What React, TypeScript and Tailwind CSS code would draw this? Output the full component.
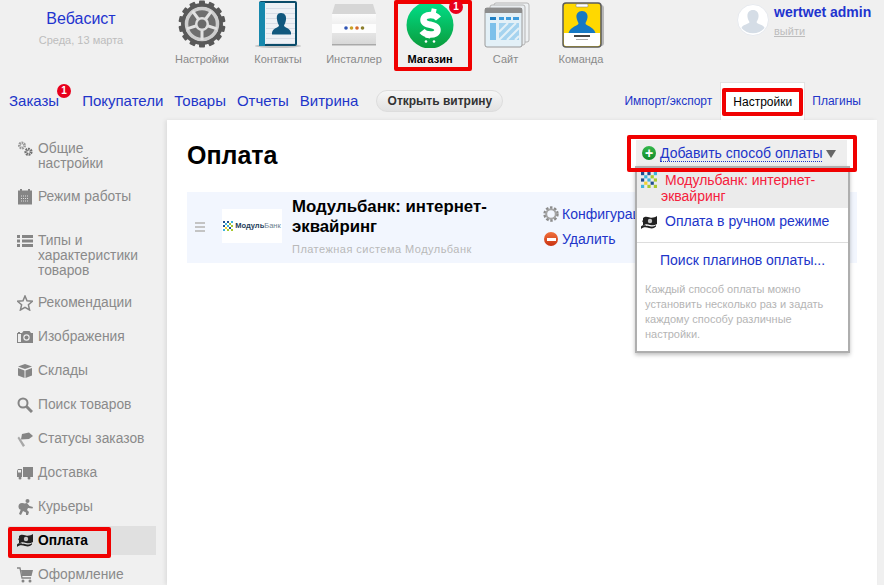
import type { ReactNode } from 'react';

/* Red annotation frame laid over a highlighted control */
function RedFrame({ className }: { className: string }) {
  return <div className={`pointer-events-none absolute rounded-[2px] border-[4px] border-[#f00000] ${className}`} />;
}

function Badge({ className }: { className: string }) {
  return (
    <span className={`absolute flex h-[14px] w-[14px] items-center justify-center rounded-full bg-[#e8001c] text-[10px] leading-none font-bold text-white ${className}`}>
      1
    </span>
  );
}

function GearIcon() {
  const teeth = Array.from({ length: 14 }, (_, i) => (i * 360) / 14);
  return (
    <svg viewBox="0 0 48 48" className="h-[48px] w-[48px]">
      {teeth.map((a) => (
        <rect key={a} x="21" y="0.500" width="6" height="7" rx="1" fill="#585858" transform={`rotate(${a} 24 24)`} />
      ))}
      <circle cx="24" cy="24" r="19" fill="none" stroke="#585858" strokeWidth="4" />
      <circle cx="24" cy="24" r="15.500" fill="#6e6e6e" stroke="#cdcdcd" strokeWidth="3.500" />
      {[0, 72, 144, 216, 288].map((a) => (
        <path key={a} d="M22.500 24 L22.500 8 H25.500 L25.500 24 Z" fill="#e2e2e2" transform={`rotate(${a + 36} 24 24)`} />
      ))}
      <circle cx="24" cy="24" r="7" fill="#dedede" />
      <circle cx="24" cy="24" r="4.500" fill="#6a6a6a" />
    </svg>
  );
}

function ContactsIcon() {
  const lines = [8, 13, 18, 23, 28, 33, 38, 43];
  return (
    <svg viewBox="0 0 48 48" className="h-[48px] w-[48px]">
      <ellipse cx="24" cy="46" rx="23" ry="2" fill="#c4c4c4" />
      <rect x="5" y="1" width="38" height="45" rx="2" fill="#0b4c6a" />
      <rect x="11" y="3" width="30" height="41" fill="#eef1f5" />
      {lines.map((y) => (
        <rect key={y} x="12" y={y} width="29" height="1" fill="#d8dde6" />
      ))}
      <rect x="5" y="2" width="6" height="44" fill="#1688ad" />
      <path d="M27 13 c4 0 5.500 3 5 6.500 c-0.300 3 -1.500 5 -2 6 c0 2 6 2.500 7 7 v2 H18 v-2 c1 -4.500 7 -5 7 -7 c-0.500 -1 -1.700 -3 -2 -6 c-0.500 -3.500 0 -6.500 4 -6.500 Z" fill="#11587e" />
    </svg>
  );
}

function InstallerIcon() {
  return (
    <svg viewBox="0 0 48 48" className="h-[48px] w-[48px]">
      <defs>
        <linearGradient id="boxBody" x1="0" y1="0" x2="0" y2="1">
          <stop offset="0" stopColor="#fbfbfb" />
          <stop offset="1" stopColor="#d8d8d8" />
        </linearGradient>
      </defs>
      <path d="M5 4 H43 L46 14 H2 Z" fill="#d6d6d6" />
      <rect x="2" y="14" width="44" height="30" fill="url(#boxBody)" />
      <rect x="2" y="44" width="44" height="1.500" fill="#a9a9a9" />
      <rect x="2" y="24" width="44" height="9" fill="#fdfdfd" />
      <circle cx="16" cy="28" r="1.800" fill="#2f55b5" />
      <circle cx="21.500" cy="28" r="1.800" fill="#c9a227" />
      <circle cx="27" cy="28" r="1.800" fill="#d6692a" />
      <circle cx="32.500" cy="28" r="1.800" fill="#8c7f2c" />
    </svg>
  );
}

function StoreIcon() {
  return (
    <svg viewBox="0 0 48 48" className="h-[48px] w-[48px]">
      <defs>
        <linearGradient id="storeGreen" x1="0" y1="0" x2="0" y2="1">
          <stop offset="0" stopColor="#00e08a" />
          <stop offset="1" stopColor="#0b9a3a" />
        </linearGradient>
      </defs>
      <circle cx="24" cy="25" r="23.500" fill="url(#storeGreen)" />
      <path d="M32.500 18.500 C30.500 16 27.500 15 24.500 15 C20 15 17.500 17 17.500 20 C17.500 26.500 31.500 23 31.500 30 C31.500 33 28.500 34.500 24.500 34.500 C21 34.500 18 33.500 16 31" fill="none" stroke="#fff" strokeWidth="6.500" />
      <rect x="25" y="8.500" width="5" height="7" fill="#fff" transform="rotate(12 27 12)" />
      <rect x="19.500" y="34" width="5" height="4" fill="#fff" transform="rotate(12 22 36)" />
      <circle cx="20" cy="41.500" r="1.300" fill="#fff" />
      <circle cx="28" cy="41.500" r="1.300" fill="#fff" />
    </svg>
  );
}

function SiteIcon() {
  return (
    <svg viewBox="0 0 48 48" className="h-[48px] w-[48px]">
      <rect x="12" y="3" width="35" height="39" rx="2" fill="#eef1f3" stroke="#b5b5b5" />
      <rect x="8" y="5" width="35" height="40" rx="2" fill="#e8ecef" stroke="#b5b5b5" />
      <rect x="3" y="8" width="37" height="39" rx="2" fill="#e3f0f7" stroke="#9a9a9a" />
      <rect x="3" y="8" width="37" height="5" fill="#8d8d8d" />
      <rect x="8" y="17" width="6" height="3" fill="#1f7fc4" />
      <rect x="17" y="17" width="5" height="3" fill="#3d9bdc" />
      <rect x="24" y="17" width="5" height="3" fill="#3d9bdc" />
      <rect x="31" y="17" width="6" height="3" fill="#3d9bdc" />
      <rect x="8" y="23" width="6" height="17" fill="#7cc0ea" />
      <rect x="17" y="23" width="20" height="17" fill="#a5d3ef" />
      <path d="M17 32 L26 23 M17 40 L34 23 M25 40 L37 28 M33 40 L37 36" stroke="#e3f0f7" strokeWidth="2" />
    </svg>
  );
}

function TeamIcon() {
  return (
    <svg viewBox="0 0 48 48" className="h-[48px] w-[48px]">
      <rect x="10" y="5" width="37" height="41" rx="3" fill="#b7b7b7" />
      <rect x="6" y="3" width="38" height="44" rx="3" fill="#ffd800" stroke="#5b5b5b" strokeWidth="1.500" />
      <path d="M7 33 H43 V44 a2 2 0 0 1 -2 2 H9 a2 2 0 0 1 -2 -2 Z" fill="#fff" />
      <rect x="19" y="4" width="12" height="3" rx="1" fill="#fff" stroke="#777" strokeWidth="0.500" />
      <path d="M25 11 c4 0 6 3 5.500 6.500 c-0.300 3 -2 5 -2 6 c0 2 8 3 10 9.500 H11.500 c2 -6.500 10 -7.500 10 -9.500 c0 -1 -1.700 -3 -2 -6 c-0.500 -3.500 1.500 -6.500 5.500 -6.500 Z" fill="#1578c4" />
      <rect x="17" y="35" width="16" height="2" fill="#444" />
      <rect x="19" y="39" width="12" height="1" fill="#aaa" />
    </svg>
  );
}

const apps: { label: string; icon: ReactNode; width: string; active?: boolean }[] = [
  { label: 'Настройки', icon: <GearIcon />, width: 'w-[76px]' },
  { label: 'Контакты', icon: <ContactsIcon />, width: 'w-[76px]' },
  { label: 'Инсталлер', icon: <InstallerIcon />, width: 'w-[76px]' },
  { label: 'Магазин', icon: <StoreIcon />, width: 'w-[76px]', active: true },
  { label: 'Сайт', icon: <SiteIcon />, width: 'w-[75px]' },
  { label: 'Команда', icon: <TeamIcon />, width: 'w-[76px]' },
];

function FlagIcon({ className = '', color = '#222' }: { className?: string; color?: string }) {
  return (
    <svg viewBox="0 0 16 13" className={className}>
      <path d="M2 2 C4 0 6 0.500 9 1.500 C11 2 14 1.500 16 0 V8 C14 9.500 11 9.500 9 9 C6 8 4 8 2 9.500 Z" fill={color} />
      <path d="M0 10.500 C1 9 3 9 4 9.500 L1 5 V4 L5 10 C7 9.500 8 10.500 10 10.500 C12 10.500 14 10 15 9 V10.500 C13 12.500 11 13 8 12 C5 11 2 11 0 13 Z" fill={color} />
      <circle cx="9" cy="5" r="2.200" fill="#c8c8c8" />
    </svg>
  );
}

/* Solid grey glyphs of the settings sidebar */
function SideIcon({ children }: { children: ReactNode }) {
  return (
    <svg viewBox="0 0 16 16" className="h-[16px] w-[16px]" fill="#858585">
      {children}
    </svg>
  );
}

const sideIcons = {
  gears: (
    <SideIcon>
      <circle cx="5" cy="4.500" r="2.600" fill="none" stroke="#999" strokeWidth="2.800" strokeDasharray="1.600 0.700" />
      <circle cx="11.500" cy="10.800" r="2.600" fill="none" stroke="#707070" strokeWidth="3" strokeDasharray="1.600 0.700" />
    </SideIcon>
  ),
  calendar: (
    <SideIcon>
      <rect x="3" y="0" width="2" height="2" />
      <rect x="11" y="0" width="2" height="2" />
      <rect x="1" y="1.500" width="14" height="14" />
      <path d="M4 7 H12 M4 9.500 H12 M4 12 H12" stroke="#ddd" strokeWidth="1" strokeDasharray="1 1" />
    </SideIcon>
  ),
  list: (
    <SideIcon>
      <rect x="0" y="2" width="3" height="3" />
      <rect x="0" y="6.500" width="3" height="3" />
      <rect x="0" y="11" width="3" height="3" />
      <rect x="5" y="2" width="11" height="3" />
      <rect x="5" y="6.500" width="11" height="3" />
      <rect x="5" y="11" width="11" height="3" />
    </SideIcon>
  ),
  star: (
    <SideIcon>
      <path d="M8 1 L10 5.800 L15.500 6.300 L11.400 9.800 L12.600 15 L8 12.300 L3.400 15 L4.600 9.800 L0.500 6.300 L6 5.800 Z" fill="none" stroke="#858585" strokeWidth="1.500" />
    </SideIcon>
  ),
  camera: (
    <SideIcon>
      <path d="M0 4 H1 V3 H3 V4 H5 L6.500 2 H12.500 L14 4 H16 V14 H0 Z" />
      <rect x="1" y="5" width="3" height="8" fill="#eee" />
      <circle cx="9.500" cy="8.500" r="3.200" fill="#eee" />
      <circle cx="9.500" cy="8.500" r="2" />
    </SideIcon>
  ),
  box: (
    <SideIcon>
      <path d="M8 1 L15 3.500 L8 6 L1 3.500 Z" />
      <path d="M1 5 L7.500 7.500 V15 L1 12.500 Z" />
      <path d="M15 5 L8.500 7.500 V15 L15 12.500 Z" />
    </SideIcon>
  ),
  search: (
    <SideIcon>
      <circle cx="6" cy="6" r="4.500" fill="none" stroke="#858585" strokeWidth="2" />
      <path d="M9.500 9.500 L15 15" stroke="#858585" strokeWidth="3" />
    </SideIcon>
  ),
  status: (
    <SideIcon>
      <path d="M5 3 L12 1.500 L16 5 L12 8 L4 8.500 Z" />
      <path d="M0.500 7 L2 5.500 L8 14.500 L6 16 Z" fill="#a8a8a8" />
    </SideIcon>
  ),
  truck: (
    <SideIcon>
      <rect x="6" y="2" width="10" height="10" />
      <path d="M0 6 L1 4 H5 V12 H0 Z" />
      <rect x="1" y="5" width="3" height="2.500" fill="#eee" />
      <circle cx="3" cy="13" r="1.500" />
      <circle cx="12" cy="13" r="1.500" />
    </SideIcon>
  ),
  courier: (
    <SideIcon>
      <circle cx="10.500" cy="2" r="2" />
      <circle cx="5" cy="7.500" r="3.500" />
      <path d="M5 5 L10 4 L12.500 7 L16 8 L15.500 9.500 L11 9 L10 11 L12 13 L11 16 L9 16 L9 13.500 L6 12 L4 16 L2 15 L4 10 Z" />
    </SideIcon>
  ),
  cart: (
    <SideIcon>
      <path d="M0 1 H3 L5 11 H14" fill="none" stroke="#858585" strokeWidth="1.300" />
      <path d="M4 3 H16 L14.500 9 H5 Z" />
      <circle cx="6" cy="14" r="1.500" />
      <circle cx="13" cy="14" r="1.500" />
    </SideIcon>
  ),
};

const sidebar: { lines: string[]; icon: ReactNode; gap: string }[] = [
  { lines: ['Общие', 'настройки'], icon: sideIcons.gears, gap: 'mb-[18px]' },
  { lines: ['Режим работы'], icon: sideIcons.calendar, gap: 'mb-[28px]' },
  { lines: ['Типы и', 'характеристики', 'товаров'], icon: sideIcons.list, gap: 'mb-[17px]' },
  { lines: ['Рекомендации'], icon: sideIcons.star, gap: 'mb-[18px]' },
  { lines: ['Изображения'], icon: sideIcons.camera, gap: 'mb-[18px]' },
  { lines: ['Склады'], icon: sideIcons.box, gap: 'mb-[18px]' },
  { lines: ['Поиск товаров'], icon: sideIcons.search, gap: 'mb-[18px]' },
  { lines: ['Статусы заказов'], icon: sideIcons.status, gap: 'mb-[18px]' },
  { lines: ['Доставка'], icon: sideIcons.truck, gap: 'mb-[18px]' },
  { lines: ['Курьеры'], icon: sideIcons.courier, gap: 'mb-[11px]' },
];

function MbMark({ className }: { className: string }) {
  const cells = [
    ['#1f4f8f', 0, 0], ['#1f4f8f', 2, 0], ['#3fb4dc', 4, 0],
    ['#3fb4dc', 1, 1], ['#a9c92f', 3, 1],
    ['#1f4f8f', 0, 2], ['#3fb4dc', 2, 2], ['#a9c92f', 4, 2],
    ['#f2d230', 1, 3], ['#1f4f8f', 3, 3],
    ['#3fb4dc', 0, 4], ['#a9c92f', 2, 4], ['#a9c92f', 4, 4],
  ] as const;
  return (
    <svg viewBox="0 0 5 5" className={className}>
      {cells.map(([c, x, y]) => (
        <rect key={`${x}-${y}`} x={x} y={y} width="1" height="1" fill={c} />
      ))}
    </svg>
  );
}

export default function App() {
  return (
    <div className="h-[585px] w-[884px] overflow-hidden bg-[#f0f0f0] font-['Liberation_Sans',Arial,sans-serif] text-[#2135c9]">
      {/* App launcher */}
      <header className="flex h-[82px]">
        <div className="w-[164px] shrink-0 pt-[10px] pr-[2px] text-center">
          <div className="text-[16px] leading-[18px] text-[#1f34cf]">Вебасист</div>
          <div className="mt-[5px] text-[11px] leading-[14px] text-[#bdbdbd]">Среда, 13 марта</div>
        </div>
        {apps.map((app) => (
          <div key={app.label} className={`relative flex h-[71px] shrink-0 flex-col items-center ${app.width}`}>
            {app.icon}
            <span className={`mt-[5px] text-[11px] leading-[13px] ${app.active ? 'font-bold text-black' : 'text-[#8a8a8a]'}`}>
              {app.label}
            </span>
            {app.active && <RedFrame className="left-[2px] top-0 h-[71px] w-[78px]" />}
            {app.active && <Badge className="right-[5px] top-0" />}
          </div>
        ))}
        <div className="flex shrink-0 pt-[4px] pl-[118px]">
          <svg viewBox="0 0 32 32" className="h-[32px] w-[32px]">
            <circle cx="16" cy="16" r="15.500" fill="#fff" stroke="#e6e9ee" />
            <path d="M16 6 c4 0 6 3 5.500 7 c-0.300 2.500 -1.500 4 -2 5 c0 2 7 2.500 8 6 a15 15 0 0 1 -23 0 c1 -3.500 8 -4 8 -6 c-0.500 -1 -1.700 -2.500 -2 -5 c-0.500 -4 1.500 -7 5.500 -7 Z" fill="#d5dde6" />
          </svg>
          <div className="ml-[5px]">
            <div className="text-[14px] leading-[16px] font-bold whitespace-nowrap text-[#1f34cf]">wertwet admin</div>
            <div className="mt-[5px] text-[11px] leading-[13px] text-[#bdbdbd] underline">выйти</div>
          </div>
        </div>
      </header>

      {/* Section tabs */}
      <nav className="flex h-[38px] items-center pl-[9px]">
        <a className="relative text-[15px]">
          Заказы
          <Badge className="-right-[12px] -top-[6px]" />
        </a>
        <a className="ml-[23px] text-[15px]">Покупатели</a>
        <a className="ml-[11px] text-[15px]">Товары</a>
        <a className="ml-[11px] text-[15px]">Отчеты</a>
        <a className="ml-[11px] text-[15px]">Витрина</a>
        <button className="ml-[18px] h-[22px] w-[127px] shrink-0 rounded-full border border-[#ddd] bg-gradient-to-b from-[#f6f6f6] to-[#e2e2e2] text-[12px] font-bold text-[#333]">
          Открыть витрину
        </button>
        <a className="ml-[121px] text-[12px]">Импорт/экспорт</a>
        <div className="relative ml-[8px] flex h-[38px] w-[85px] shrink-0 items-center justify-center border border-b-0 border-[#e2e2e2] bg-white text-[12px] text-black">
          Настройки
          <RedFrame className="left-[1px] top-[5px] h-[28px] w-[81px]" />
        </div>
        <a className="ml-[7px] text-[12px]">Плагины</a>
      </nav>

      <div className="flex h-[465px]">
        {/* Settings sidebar */}
        <aside className="w-[167px] shrink-0 pt-[21px] pl-[8px] text-[13.800px] leading-[15px] text-[#8a8a8a]">
          {sidebar.map((item) => (
            <div key={item.lines[0]} className={`flex pl-[9px] ${item.gap}`}>
              <span className="mr-[5px] h-[16px] w-[16px] shrink-0">{item.icon}</span>
              <span className="flex flex-col">
                {item.lines.map((line) => (
                  <span key={line}>{line}</span>
                ))}
              </span>
            </div>
          ))}
          <div className="relative flex h-[29px] w-[148px] items-center bg-[#e0e0e0] pl-[9px] font-bold text-black">
            <FlagIcon className="mr-[5px] h-[13px] w-[16px]" />
            Оплата
            <RedFrame className="left-0 top-[1px] h-[31px] w-[103px]" />
          </div>
          <div className="mt-[12px] flex pl-[9px]">
            <span className="mr-[5px] h-[16px] w-[16px] shrink-0">{sideIcons.cart}</span>
            Оформление
          </div>
        </aside>

        {/* Main panel */}
        <main className="relative h-full w-[710px] shrink-0 bg-white pt-[21px] pl-[20px] shadow-[-2px_0_4px_rgba(0,0,0,0.08)]">
          <h1 className="text-[25px] leading-[28px] font-bold text-black">Оплата</h1>

          <section className="mt-[23px] flex h-[71px] w-[670px] bg-[#f2f6fe]">
            <div className="mt-[30px] ml-[8px] flex h-[10px] w-[10px] flex-col justify-between">
              <span className="h-[2px] bg-[#c4c4c4]" />
              <span className="h-[2px] bg-[#c4c4c4]" />
              <span className="h-[2px] bg-[#c4c4c4]" />
            </div>
            <div className="mt-[17px] ml-[17px] flex h-[34px] w-[60px] items-center justify-center gap-[2px] bg-white">
              <MbMark className="h-[10px] w-[10px]" />
              <span className="text-[7.500px] font-bold whitespace-nowrap text-[#25405a]">
                Модуль<span className="font-normal text-[#6d7f90]">Банк</span>
              </span>
            </div>
            <div className="ml-[10px] w-[230px] pt-[5px]">
              <div className="text-[16.800px] leading-[20px] font-bold text-black">Модульбанк: интернет-эквайринг</div>
              <div className="mt-[6px] text-[11px] leading-[13px] tracking-[0.470px] whitespace-nowrap text-[#b9b9b9]">Платежная система Модульбанк</div>
            </div>
            <div className="ml-[21px] pt-[14px] text-[14px] leading-[16px]">
              <div className="flex items-center whitespace-nowrap">
                <svg viewBox="0 0 16 16" className="mr-[3px] h-[16px] w-[16px]">
                  <circle cx="8" cy="8" r="6" fill="none" stroke="#8c8c8c" strokeWidth="3.400" strokeDasharray="2.300 1.500" />
                  <circle cx="8" cy="8" r="4.800" fill="none" stroke="#a5a5a5" strokeWidth="2" />
                </svg>
                Конфигурация
              </div>
              <div className="mt-[9px] flex items-center">
                <span className="mr-[4px] ml-[1px] flex h-[14px] w-[14px] items-center justify-center rounded-full bg-gradient-to-b from-[#f0703c] to-[#c9300f]">
                  <span className="h-[3px] w-[9px] bg-white" />
                </span>
                Удалить
              </div>
            </div>
          </section>

          {/* Add payment method dropdown */}
          <div className="absolute top-[20px] left-[468px] w-[215px]">
            <div className="ml-[1px] flex h-[26px] w-[211px] items-center bg-[#eeeeee] pl-[6px] text-[14px]">
              <span className="mr-[4px] flex h-[14px] w-[14px] items-center justify-center rounded-full bg-gradient-to-b from-[#34b84c] to-[#0e8a28] text-[14px] leading-none font-bold text-white">
                +
              </span>
              <span className="border-b border-dotted border-[#2135c9] leading-[16px] whitespace-nowrap">Добавить способ оплаты</span>
              <span className="mt-[2px] ml-[4px] h-0 w-0 border-x-[5px] border-t-[8px] border-x-transparent border-t-[#666]" />
            </div>
            <div className="w-[215px] border-2 border-[#aeaeae] bg-white text-[14px] leading-[16px] shadow-[0_2px_4px_rgba(0,0,0,0.25)]">
              <div className="h-[40px] bg-[#ebebeb] pt-[4px] pl-[24px] text-[#f5203c]">
                <div className="relative pl-[4px]">
                  <MbMark className="absolute -left-[20px] top-0 h-[16px] w-[16px]" />
                  Модульбанк: интернет-
                </div>
                <div>эквайринг</div>
              </div>
              <div className="flex h-[35px] border-b border-[#ddd] pt-[5px] pl-[4px]">
                <FlagIcon className="mt-[3px] mr-[8px] h-[13px] w-[16px]" />
                <span>Оплата в ручном режиме</span>
              </div>
              <div className="mt-[9px] pl-[23px]">Поиск плагинов оплаты...</div>
              <p className="mt-[14px] px-[8px] pb-[9px] text-[11px] leading-[15px] text-[#b5b5b5]">
                Каждый способ оплаты можно установить несколько раз и задать каждому способу различные настройки.
              </p>
            </div>
            <RedFrame className="-left-[8px] -top-[5px] h-[37px] w-[230px]" />
          </div>
        </main>
      </div>
    </div>
  );
}
